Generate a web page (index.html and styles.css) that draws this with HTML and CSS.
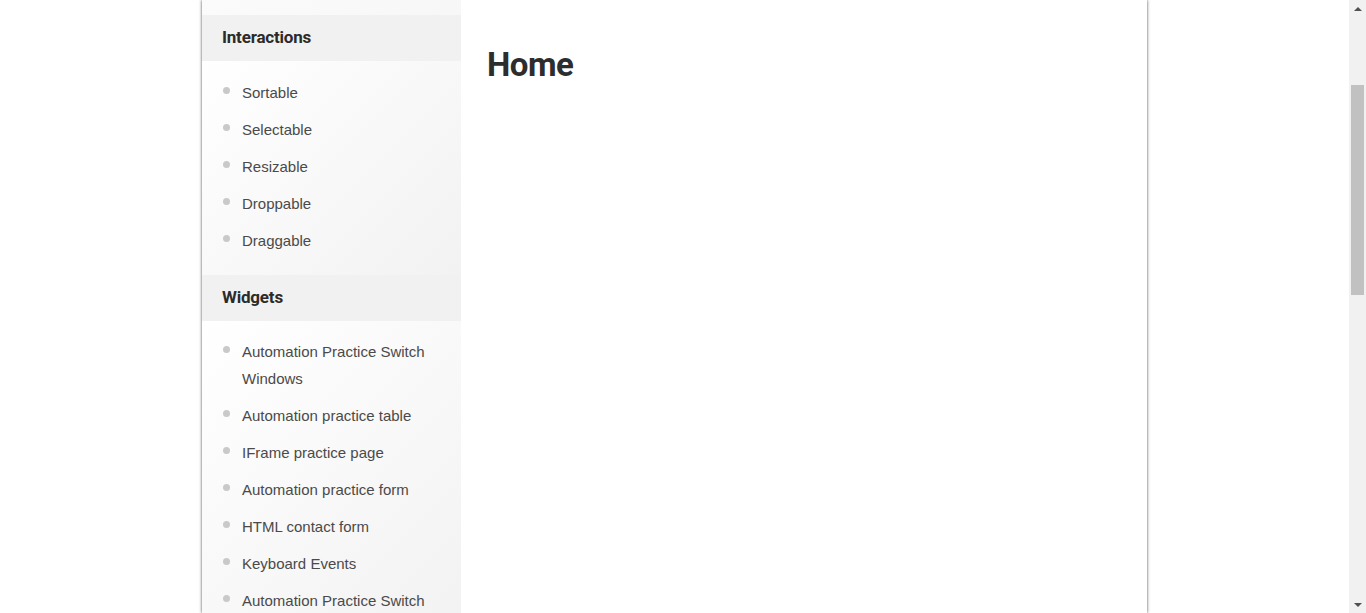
FILE: index.html
```html
<!DOCTYPE html>
<html lang="en">
<head>
<meta charset="utf-8">
<title>Home</title>
<link rel="stylesheet" href="styles.css">
</head>
<body>
<div class="page">
  <div class="container">
    <aside class="sidebar">
      <div class="tail"></div>
      <h3 class="side-title">Interactions</h3>
      <ul class="side-list">
        <li><a href="#">Sortable</a></li>
        <li><a href="#">Selectable</a></li>
        <li><a href="#">Resizable</a></li>
        <li><a href="#">Droppable</a></li>
        <li><a href="#">Draggable</a></li>
      </ul>
      <h3 class="side-title">Widgets</h3>
      <ul class="side-list second">
        <li><a href="#">Automation Practice Switch Windows</a></li>
        <li><a href="#">Automation practice table</a></li>
        <li><a href="#">IFrame practice page</a></li>
        <li><a href="#">Automation practice form</a></li>
        <li><a href="#">HTML contact form</a></li>
        <li><a href="#">Keyboard Events</a></li>
        <li><a href="#">Automation Practice Switch</a></li>
      </ul>
    </aside>
    <main class="content">
      <h1 class="title">Home</h1>
    </main>
  </div>
</div>
<div class="scrollbar">
  <div class="arrow up"></div>
  <div class="track"><div class="thumb"></div></div>
  <div class="arrow down"></div>
</div>
</body>
</html>
```
FILE: styles.css
```css
html, body {
  margin: 0;
  padding: 0;
  height: 100%;
  overflow: hidden;
  background: #fff;
}
body {
  font-family: "Liberation Sans", Arial, sans-serif;
}
.page {
  width: 1349px;
  height: 100%;
}
.container {
  width: 945px;
  margin: 0 auto;
  height: 100%;
  display: flex;
  box-shadow: 0 0 3px rgba(0,0,0,0.7);
  background: #fff;
  overflow: hidden;
}
.sidebar {
  width: 259px;
  flex: none;
  display: flex;
  flex-direction: column;
  overflow: hidden;
}
.sidebar > * {
  flex: none;
}
.tail {
  height: 15px;
  background: linear-gradient(135deg, #fbfbfb, #f7f7f7);
}
.side-title {
  margin: 0;
  height: 46px;
  display: flex;
  align-items: center;
  padding-left: 20px;
  padding-bottom: 2px;
  box-sizing: border-box;
  background: #f1f1f1;
  font-family: Roboto, "Noto Sans", sans-serif;
  font-weight: 700;
  font-size: 17px;
  color: #2b2b2b;
  letter-spacing: -0.2px;
}
.side-list {
  list-style: none;
  margin: 0;
  padding: 18px 10px 11px 20px;
  background: linear-gradient(135deg, #ffffff 0%, #f2f2f2 100%);
}
.side-list.second {
  padding-top: 17px;
}
.side-list li {
  position: relative;
  padding-left: 20px;
  margin-bottom: 10px;
  font-size: 15px;
  line-height: 27px;
}
.side-list li::before {
  content: "";
  position: absolute;
  left: 1px;
  top: 8px;
  width: 7px;
  height: 7px;
  border-radius: 50%;
  background: #c9c9c9;
}
.side-list a {
  color: #4a4a4a;
  text-decoration: none;
}
.content {
  flex: 1;
  padding: 0 26px;
}
.title {
  margin: 43px 0 0;
  font-family: Roboto, "Noto Sans", sans-serif;
  font-weight: 700;
  font-size: 33px;
  line-height: 44px;
  color: #2d2d2d;
  letter-spacing: -0.5px;
}
.scrollbar {
  position: fixed;
  top: 0;
  right: 0;
  width: 17px;
  height: 100%;
  background: #f1f1f1;
  display: flex;
  flex-direction: column;
}
.arrow {
  height: 17px;
  flex: none;
  display: flex;
  justify-content: center;
  align-items: center;
}
.arrow::after {
  content: "";
  display: block;
  width: 0;
  height: 0;
  border-left: 4px solid transparent;
  border-right: 4px solid transparent;
}
.arrow.up::after {
  border-bottom: 4px solid #505050;
}
.arrow.down::after {
  border-top: 4px solid #505050;
}
.track {
  flex: 1;
  position: relative;
}
.thumb {
  position: absolute;
  left: 2px;
  right: 2px;
  top: 68px;
  height: 210px;
  background: #c1c1c1;
}
```
